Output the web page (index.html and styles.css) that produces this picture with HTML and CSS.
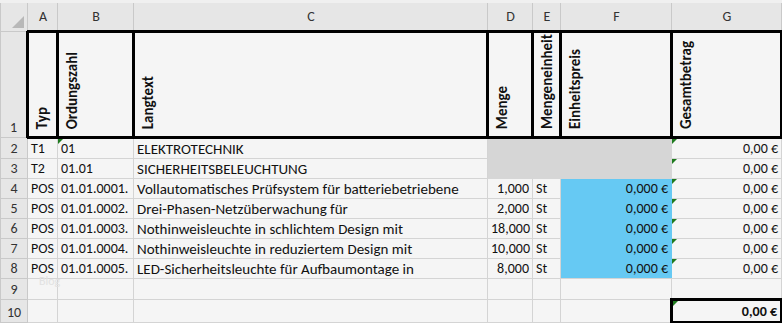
FILE: index.html
```html
<!DOCTYPE html>
<html lang="de">
<head>
<meta charset="utf-8">
<title>Leistungsverzeichnis</title>
<link rel="stylesheet" href="styles.css">
</head>
<body>
<div class="ribbon-edge"></div>
<div class="wrap">
<table class="sheet">
  <colgroup>
    <col class="c-rn"><col class="c-a"><col class="c-b"><col class="c-c"><col class="c-d"><col class="c-e"><col class="c-f"><col class="c-g"><col class="c-h">
  </colgroup>
  <tr class="colhead">
    <th class="corner"><span class="corner-tri"></span></th>
    <th>A</th><th>B</th><th>C</th><th>D</th><th>E</th><th>F</th><th>G</th><th></th>
  </tr>
  <tr class="r-title">
    <th class="rn">1</th>
    <td class="hd"><span class="vt">Typ</span></td>
    <td class="hd"><span class="vt">Ordungszahl</span></td>
    <td class="hd"><span class="vt">Langtext</span></td>
    <td class="hd"><span class="vt">Menge</span></td>
    <td class="hd"><span class="vt">Mengeneinheit</span></td>
    <td class="hd"><span class="vt">Einheitspreis</span></td>
    <td class="hd"><span class="vt">Gesamtbetrag</span></td>
    <td></td>
  </tr>
  <tr>
    <th class="rn">2</th>
    <td>T1</td><td class="flag">01</td><td class="lt">ELEKTROTECHNIK</td>
    <td class="grey gl"></td><td class="grey"></td><td class="grey gr"></td>
    <td class="num flag">0,00 €</td><td></td>
  </tr>
  <tr>
    <th class="rn">3</th>
    <td>T2</td><td>01.01</td><td class="lt">SICHERHEITSBELEUCHTUNG</td>
    <td class="grey gl"></td><td class="grey"></td><td class="grey gr"></td>
    <td class="num flag">0,00 €</td><td></td>
  </tr>
  <tr>
    <th class="rn">4</th>
    <td>POS</td><td>01.01.0001.</td><td class="lt">Vollautomatisches Prüfsystem für batteriebetriebene</td>
    <td class="num">1,000</td><td>St</td><td class="num blue">0,000 €</td>
    <td class="num flag">0,00 €</td><td></td>
  </tr>
  <tr>
    <th class="rn">5</th>
    <td>POS</td><td>01.01.0002.</td><td class="lt">Drei-Phasen-Netzüberwachung für</td>
    <td class="num">2,000</td><td>St</td><td class="num blue">0,000 €</td>
    <td class="num flag">0,00 €</td><td></td>
  </tr>
  <tr>
    <th class="rn">6</th>
    <td>POS</td><td>01.01.0003.</td><td class="lt">Nothinweisleuchte in schlichtem Design mit</td>
    <td class="num">18,000</td><td>St</td><td class="num blue">0,000 €</td>
    <td class="num flag">0,00 €</td><td></td>
  </tr>
  <tr>
    <th class="rn">7</th>
    <td>POS</td><td>01.01.0004.</td><td class="lt">Nothinweisleuchte in reduziertem Design mit</td>
    <td class="num">10,000</td><td>St</td><td class="num blue">0,000 €</td>
    <td class="num flag">0,00 €</td><td></td>
  </tr>
  <tr>
    <th class="rn">8</th>
    <td>POS</td><td>01.01.0005.</td><td class="lt">LED-Sicherheitsleuchte für Aufbaumontage in</td>
    <td class="num">8,000</td><td>St</td><td class="num blue blue-end">0,000 €</td>
    <td class="num flag">0,00 €</td><td></td>
  </tr>
  <tr>
    <th class="rn">9</th>
    <td></td><td></td><td></td><td></td><td></td><td></td><td></td><td></td>
  </tr>
  <tr class="r-sum">
    <th class="rn">10</th>
    <td></td><td></td><td></td><td></td><td></td><td></td>
    <td class="num flag total">0,00 €</td><td></td>
  </tr>
  <tr>
    <th class="rn"></th>
    <td></td><td></td><td></td><td></td><td></td><td></td><td></td><td></td>
  </tr>
</table>
<span class="mark">Blog</span>
</div>
</body>
</html>
```

FILE: styles.css
```css
html, body {
  margin: 0;
  padding: 0;
}

body {
  width: 782px;
  height: 323px;
  overflow: hidden;
  background: #f5f5f5;
  font-family: Carlito, Calibri, Lato, "Liberation Sans", sans-serif;
  font-size: 14px;
  color: #111;
}

.ribbon-edge {
  height: 3px;
  background: #f0f0f0;
}

.wrap {
  position: relative;
}

.sheet {
  border-collapse: collapse;
  table-layout: fixed;
  width: 790px;
}

.c-rn { width: 27px; }
.c-a { width: 30px; }
.c-b { width: 76px; }
.c-c { width: 354px; }
.c-d { width: 45px; }
.c-e { width: 28px; }
.c-f { width: 111px; }
.c-g { width: 110px; }
.c-h { width: 9px; }

.sheet td,
.sheet th {
  border: 1px solid #d4d4d4;
  padding: 0 2px 0 3px;
  height: 19px;
  line-height: 18px;
  white-space: nowrap;
  overflow: hidden;
  vertical-align: bottom;
  text-align: left;
  font-weight: normal;
  position: relative;
}

/* long description column */
.sheet td.lt {
  font-size: 15px;
}

/* column letters */
.colhead th {
  height: 27px;
  background: #e6e6e6;
  border-color: #c9c9c9;
  border-top: 0;
  text-align: center;
  vertical-align: middle;
  color: #333;
}

.corner {
  background: #e6e6e6;
}

.corner-tri {
  position: absolute;
  right: 3px;
  bottom: 3px;
  width: 0;
  height: 0;
  border-left: 12px solid transparent;
  border-bottom: 12px solid #b8b8b8;
}

/* row numbers */
.sheet th.rn {
  background: #e6e6e6;
  border-color: #c9c9c9;
  text-align: center;
  color: #333;
  padding: 0;
}

/* title row with rotated captions */
.r-title td,
.r-title th {
  height: 101px;
}

.sheet td.hd {
  border: 3px solid #000;
  padding: 0 0 2px 4px;
}

.vt {
  display: inline-block;
  writing-mode: vertical-rl;
  transform: rotate(180deg);
  font-weight: bold;
  font-size: 15px;
  line-height: 18px;
}

.sheet td.num {
  text-align: right;
  padding-right: 3px;
}

.grey {
  background: #d6d6d6;
  border-color: #d6d6d6 !important;
}

.grey.gl {
  border-left-color: #d4d4d4 !important;
}

.blue {
  background: #66c9f3;
  border-top-color: #66c9f3 !important;
  border-bottom-color: #66c9f3 !important;
  border-right-color: #66c9f3 !important;
}

.blue.blue-end {
  border-bottom-color: #d4d4d4 !important;
}

/* green error indicator in the upper-left corner */
.flag::before {
  content: "";
  position: absolute;
  left: 0;
  top: 0;
  width: 0;
  height: 0;
  border-top: 5px solid #1f7a1f;
  border-right: 5px solid transparent;
}

.r-sum td,
.r-sum th {
  height: 20px;
}

.sheet td.total {
  border: 3px solid #000;
  font-weight: bold;
}

.mark {
  position: absolute;
  left: 39px;
  top: 272px;
  font-size: 12px;
  line-height: 12px;
  color: #e2e2e2;
  pointer-events: none;
}
```
